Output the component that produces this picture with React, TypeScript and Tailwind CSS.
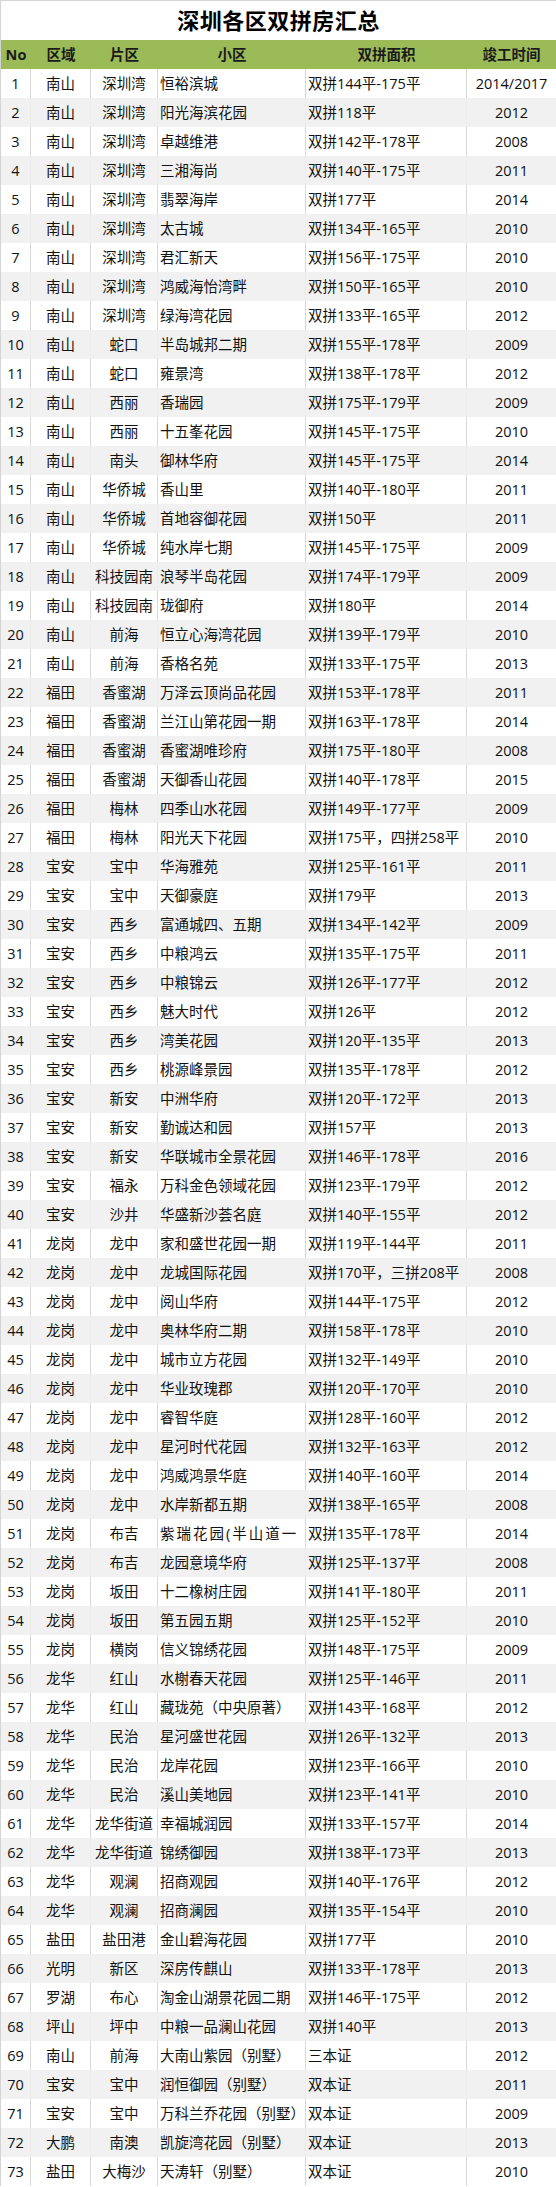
import React from "react";

type Row = [string, string, string, string, string];

const rows: Row[] = [
    ["南山", "深圳湾", "恒裕滨城", "双拼144平-175平", "2014/2017"],
    ["南山", "深圳湾", "阳光海滨花园", "双拼118平", "2012"],
    ["南山", "深圳湾", "卓越维港", "双拼142平-178平", "2008"],
    ["南山", "深圳湾", "三湘海尚", "双拼140平-175平", "2011"],
    ["南山", "深圳湾", "翡翠海岸", "双拼177平", "2014"],
    ["南山", "深圳湾", "太古城", "双拼134平-165平", "2010"],
    ["南山", "深圳湾", "君汇新天", "双拼156平-175平", "2010"],
    ["南山", "深圳湾", "鸿威海怡湾畔", "双拼150平-165平", "2010"],
    ["南山", "深圳湾", "绿海湾花园", "双拼133平-165平", "2012"],
    ["南山", "蛇口", "半岛城邦二期", "双拼155平-178平", "2009"],
    ["南山", "蛇口", "雍景湾", "双拼138平-178平", "2012"],
    ["南山", "西丽", "香瑞园", "双拼175平-179平", "2009"],
    ["南山", "西丽", "十五峯花园", "双拼145平-175平", "2010"],
    ["南山", "南头", "御林华府", "双拼145平-175平", "2014"],
    ["南山", "华侨城", "香山里", "双拼140平-180平", "2011"],
    ["南山", "华侨城", "首地容御花园", "双拼150平", "2011"],
    ["南山", "华侨城", "纯水岸七期", "双拼145平-175平", "2009"],
    ["南山", "科技园南", "浪琴半岛花园", "双拼174平-179平", "2009"],
    ["南山", "科技园南", "珑御府", "双拼180平", "2014"],
    ["南山", "前海", "恒立心海湾花园", "双拼139平-179平", "2010"],
    ["南山", "前海", "香格名苑", "双拼133平-175平", "2013"],
    ["福田", "香蜜湖", "万泽云顶尚品花园", "双拼153平-178平", "2011"],
    ["福田", "香蜜湖", "兰江山第花园一期", "双拼163平-178平", "2014"],
    ["福田", "香蜜湖", "香蜜湖唯珍府", "双拼175平-180平", "2008"],
    ["福田", "香蜜湖", "天御香山花园", "双拼140平-178平", "2015"],
    ["福田", "梅林", "四季山水花园", "双拼149平-177平", "2009"],
    ["福田", "梅林", "阳光天下花园", "双拼175平，四拼258平", "2010"],
    ["宝安", "宝中", "华海雅苑", "双拼125平-161平", "2011"],
    ["宝安", "宝中", "天御豪庭", "双拼179平", "2013"],
    ["宝安", "西乡", "富通城四、五期", "双拼134平-142平", "2009"],
    ["宝安", "西乡", "中粮鸿云", "双拼135平-175平", "2011"],
    ["宝安", "西乡", "中粮锦云", "双拼126平-177平", "2012"],
    ["宝安", "西乡", "魅大时代", "双拼126平", "2012"],
    ["宝安", "西乡", "湾美花园", "双拼120平-135平", "2013"],
    ["宝安", "西乡", "桃源峰景园", "双拼135平-178平", "2012"],
    ["宝安", "新安", "中洲华府", "双拼120平-172平", "2013"],
    ["宝安", "新安", "勤诚达和园", "双拼157平", "2013"],
    ["宝安", "新安", "华联城市全景花园", "双拼146平-178平", "2016"],
    ["宝安", "福永", "万科金色领域花园", "双拼123平-179平", "2012"],
    ["宝安", "沙井", "华盛新沙荟名庭", "双拼140平-155平", "2012"],
    ["龙岗", "龙中", "家和盛世花园一期", "双拼119平-144平", "2011"],
    ["龙岗", "龙中", "龙城国际花园", "双拼170平，三拼208平", "2008"],
    ["龙岗", "龙中", "阅山华府", "双拼144平-175平", "2012"],
    ["龙岗", "龙中", "奥林华府二期", "双拼158平-178平", "2010"],
    ["龙岗", "龙中", "城市立方花园", "双拼132平-149平", "2010"],
    ["龙岗", "龙中", "华业玫瑰郡", "双拼120平-170平", "2010"],
    ["龙岗", "龙中", "睿智华庭", "双拼128平-160平", "2012"],
    ["龙岗", "龙中", "星河时代花园", "双拼132平-163平", "2012"],
    ["龙岗", "龙中", "鸿威鸿景华庭", "双拼140平-160平", "2014"],
    ["龙岗", "龙中", "水岸新都五期", "双拼138平-165平", "2008"],
    ["龙岗", "布吉", "紫瑞花园(半山道一", "双拼135平-178平", "2014"],
    ["龙岗", "布吉", "龙园意境华府", "双拼125平-137平", "2008"],
    ["龙岗", "坂田", "十二橡树庄园", "双拼141平-180平", "2011"],
    ["龙岗", "坂田", "第五园五期", "双拼125平-152平", "2010"],
    ["龙岗", "横岗", "信义锦绣花园", "双拼148平-175平", "2009"],
    ["龙华", "红山", "水榭春天花园", "双拼125平-146平", "2011"],
    ["龙华", "红山", "藏珑苑（中央原著）", "双拼143平-168平", "2012"],
    ["龙华", "民治", "星河盛世花园", "双拼126平-132平", "2013"],
    ["龙华", "民治", "龙岸花园", "双拼123平-166平", "2010"],
    ["龙华", "民治", "溪山美地园", "双拼123平-141平", "2010"],
    ["龙华", "龙华街道", "幸福城润园", "双拼133平-157平", "2014"],
    ["龙华", "龙华街道", "锦绣御园", "双拼138平-173平", "2013"],
    ["龙华", "观澜", "招商观园", "双拼140平-176平", "2012"],
    ["龙华", "观澜", "招商澜园", "双拼135平-154平", "2010"],
    ["盐田", "盐田港", "金山碧海花园", "双拼177平", "2010"],
    ["光明", "新区", "深房传麒山", "双拼133平-178平", "2013"],
    ["罗湖", "布心", "淘金山湖景花园二期", "双拼146平-175平", "2012"],
    ["坪山", "坪中", "中粮一品澜山花园", "双拼140平", "2013"],
    ["南山", "前海", "大南山紫园（别墅）", "三本证", "2012"],
    ["宝安", "宝中", "润恒御园（别墅）", "双本证", "2011"],
    ["宝安", "宝中", "万科兰乔花园（别墅）", "双本证", "2009"],
    ["大鹏", "南澳", "凯旋湾花园（别墅）", "双本证", "2013"],
    ["盐田", "大梅沙", "天涛轩（别墅）", "双本证", "2010"],
];

const cols = "grid grid-cols-[30px_60px_67px_148px_161px_1fr]";

const App = () => {
    return (
        <div className="w-[556px] bg-white border-l border-t border-[#d4d4d4] font-['Open_Sans','Noto_Sans_CJK_SC',sans-serif] text-[14.5px] text-[#111]">
            {/* Title */}
            <div className="h-[39px] flex items-center justify-center">
                <h1 className="text-[22px] font-bold text-black tracking-[0.5px]">深圳各区双拼房汇总</h1>
            </div>

            {/* Header */}
            <div className={`${cols} h-[29px] bg-[#9bbb59] font-bold text-[14.5px] text-[#1a1a1a]`}>
                <div className="flex items-center justify-center">No</div>
                <div className="flex items-center justify-center">区域</div>
                <div className="flex items-center justify-center">片区</div>
                <div className="flex items-center justify-center">小区</div>
                <div className="flex items-center justify-center">双拼面积</div>
                <div className="flex items-center justify-center">竣工时间</div>
            </div>

            {/* Rows */}
            {rows.map((r, i) => {
                const odd = i % 2 === 1;
                const line = odd ? "border-[#ececec]" : "border-[#d9d9d9]";
                const spaced = r[2].startsWith("紫瑞");
                return (
                    <div key={i} className={`${cols} h-[29px] ${odd ? "bg-[#f1f1f1]" : "bg-white"}`}>
                        <div className={`flex items-center justify-center border-r ${line}`}>{i + 1}</div>
                        <div className={`flex items-center justify-center border-r ${line}`}>{r[0]}</div>
                        <div className={`flex items-center justify-center border-r ${line} whitespace-nowrap`}>{r[1]}</div>
                        <div className={`flex items-center pl-[2px] border-r ${line} whitespace-nowrap`}>
                            <span className={spaced ? "tracking-[2px]" : ""}>{r[2]}</span>
                        </div>
                        <div className={`flex items-center pl-[2px] border-r ${line} whitespace-nowrap`}>{r[3]}</div>
                        <div className="flex items-center justify-center">{r[4]}</div>
                    </div>
                );
            })}
        </div>
    );
};

export default App;
